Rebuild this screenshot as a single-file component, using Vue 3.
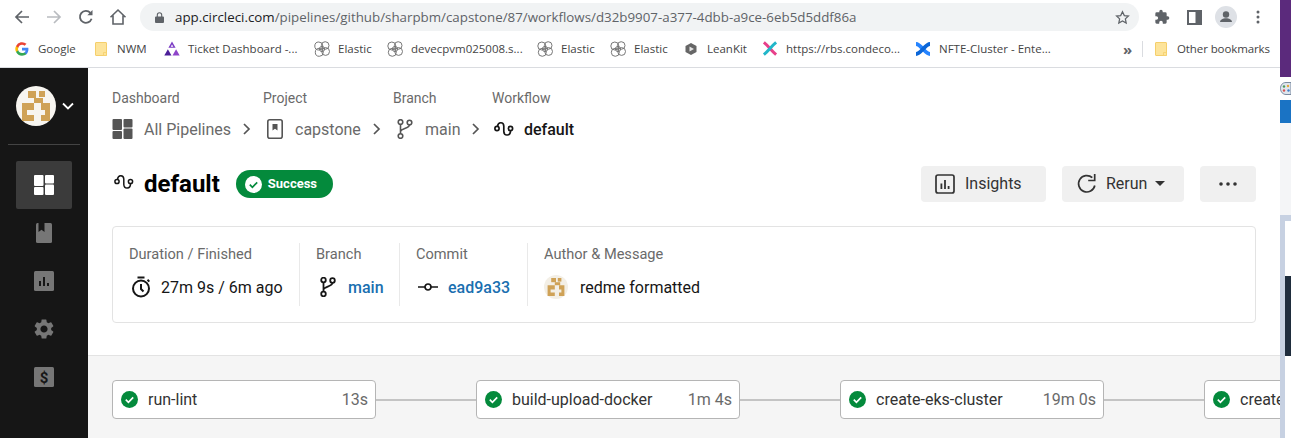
<template>
  <div class="screen">
    <div class="window">
      <div class="toolbar">
        <div class="tool">
          <svg width="16" height="16" viewBox="0 0 16 16" fill="none" stroke="#5f6368" stroke-width="1.7"><path d="M15 8H2M8 2 2 8l6 6" /></svg>
        </div>
        <div class="tool">
          <svg width="16" height="16" viewBox="0 0 16 16" fill="none" stroke="#b9bcc0" stroke-width="1.7"><path d="M1 8h13M8 2l6 6-6 6" /></svg>
        </div>
        <div class="tool">
          <svg width="16" height="16" viewBox="0 0 16 16" fill="none" stroke="#5f6368" stroke-width="1.8"><path d="M13.6 9.8A6 6 0 1 1 12.4 3.8" /><path d="M14.5 1v5.2H9.3z" fill="#5f6368" stroke="none" /></svg>
        </div>
        <div class="tool">
          <svg width="18" height="18" viewBox="0 0 18 18" fill="none" stroke="#5f6368" stroke-width="1.6"><path d="M1.5 9.3 9 2l7.5 7.3M4 7.5V16h10V7.5" /></svg>
        </div>
        <div class="urlbar">
          <svg class="lock" width="9" height="11" viewBox="0 0 9 11"><path d="M1 4.5h7a1 1 0 0 1 1 1V10a1 1 0 0 1-1 1H1a1 1 0 0 1-1-1V5.500a1 1 0 0 1 1-1z" fill="#5f6368" /><path d="M2.300 5V3a2.200 2.200 0 0 1 4.400 0v2" fill="none" stroke="#5f6368" stroke-width="1.100" /></svg>
          <span class="url"><span class="host">app.circleci.com</span>/pipelines/github/sharpbm/capstone/87/workflows/d32b9907-a377-4dbb-a9ce-6eb5d5ddf86a</span>
          <svg class="star" width="15" height="15" viewBox="0 0 24 24" fill="none" stroke="#5f6368" stroke-width="2"><path d="m12 2.800 2.900 6.100 6.600.8-4.900 4.500 1.300 6.600-5.900-3.300-5.900 3.300 1.300-6.600-4.900-4.500 6.600-.8z" /></svg>
        </div>
        <div class="actions">
          <div class="tool">
            <svg width="16" height="16" viewBox="0 0 24 24" fill="#5f6368"><path d="M20.500 11H19V7a2 2 0 0 0-2-2h-4V3.500a2.500 2.500 0 0 0-5 0V5H4a2 2 0 0 0-2 2v3.800h1.500a2.700 2.700 0 0 1 0 5.400H2V20a2 2 0 0 0 2 2h3.800v-1.500a2.700 2.700 0 0 1 5.400 0V22H17a2 2 0 0 0 2-2v-4h1.500a2.500 2.500 0 0 0 0-5z" /></svg>
          </div>
          <div class="tool">
            <svg width="15" height="15" viewBox="0 0 15 15"><path d="M0 0h15v15H0z" fill="#5f6368" /><path d="M2 2h6.500v11H2z" fill="#fff" /></svg>
          </div>
          <div class="tool">
            <svg width="22" height="22" viewBox="0 0 22 22"><circle cx="11" cy="11" r="11" fill="#dee1e6" /><circle cx="11" cy="8.500" r="3.200" fill="#5f6368" /><path d="M5 16c.3-2.700 3-3.800 6-3.800s5.700 1.100 6 3.800z" fill="#5f6368" /></svg>
          </div>
          <div class="tool">
            <svg width="4" height="14" viewBox="0 0 4 14" fill="#5f6368"><circle cx="2" cy="2" r="1.500" /><circle cx="2" cy="7" r="1.500" /><circle cx="2" cy="12" r="1.500" /></svg>
          </div>
        </div>
      </div>

      <div class="bookmarks">
        <div v-for="b in bookmarks" :key="b.left" class="bookmark" :style="{ width: b.width + 'px' }">
          <span class="favicon">
            <svg v-if="b.icon === 'google'" width="14" height="14" viewBox="0 0 24 24">
              <path d="M23 12.300c0-.8-.1-1.600-.2-2.300H12v4.400h6.200a5.300 5.300 0 0 1-2.300 3.500v2.900h3.700c2.200-2 3.400-5 3.400-8.500z" fill="#4285f4" />
              <path d="M12 23.500c3.100 0 5.700-1 7.600-2.800l-3.700-2.900c-1 .7-2.300 1.100-3.900 1.100-3 0-5.500-2-6.400-4.800H1.800v3A11.500 11.500 0 0 0 12 23.500z" fill="#34a853" />
              <path d="M5.600 14.100a6.900 6.900 0 0 1 0-4.400v-3H1.800a11.500 11.500 0 0 0 0 10.400z" fill="#fbbc05" />
              <path d="M12 4.800c1.700 0 3.200.6 4.400 1.700l3.300-3.300A11.500 11.500 0 0 0 1.800 6.700l3.800 3C6.500 6.800 9 4.800 12 4.800z" fill="#ea4335" />
            </svg>
            <svg v-else-if="b.icon === 'folder'" width="12" height="14" viewBox="0 0 12 14">
              <path d="M1 .5h10a.5.5 0 0 1 .5.500v12a.5.5 0 0 1-.5.500H1a.5.5 0 0 1-.5-.5V1A.5.5 0 0 1 1 .5z" fill="#fde49b" stroke="#f5cf6b" />
              <path d="M8.500 10.500h3v3h-3z" fill="#fde49b" stroke="#f5cf6b" stroke-width=".8" />
            </svg>
            <svg v-else-if="b.icon === 'ticket'" width="16" height="16" viewBox="0 0 16 16">
              <path d="m8 .5 3.600 6.200H4.400z" fill="#7b3cc4" />
              <path d="m.3 14.500 3.600-6.200 3.600 6.200z" fill="#4b1f99" />
              <path d="m8.500 14.500 3.600-6.200 3.600 6.200z" fill="#8e44c9" />
              <path d="M8 3.500 9.300 5.700H6.700z" fill="#fff" />
            </svg>
            <svg v-else-if="b.icon === 'elastic'" width="16" height="16" viewBox="0 0 16 16" fill="none" stroke="#777" stroke-width="1">
              <circle cx="4.800" cy="5" r="4" />
              <circle cx="11.200" cy="4.500" r="3.800" />
              <circle cx="11.600" cy="10.500" r="3.900" />
              <circle cx="5.300" cy="11.300" r="4" />
              <circle cx="8" cy="8" r="2.600" />
            </svg>
            <svg v-else-if="b.icon === 'leankit'" width="14" height="14" viewBox="0 0 14 14">
              <path d="m7 1 5.500 3v6L7 13l-5.500-3V4z" fill="#666" />
              <path d="M5.500 4.500 10 7l-4.500 2.500z" fill="#e4e4e4" />
            </svg>
            <svg v-else-if="b.icon === 'condeco'" width="17" height="17" viewBox="0 0 17 17" fill="none" stroke-width="3.200">
              <path d="M2 2c5 4 8 9 13 13" stroke="#e8408a" />
              <path d="M15 2C10 6 7 11 2 15" stroke="#22b6c9" />
            </svg>
            <svg v-else width="16" height="16" viewBox="0 0 16 16" fill="none" stroke="#2684ff" stroke-width="3.800">
              <path d="M1 3c5 0 9 10 14 10" />
              <path d="M15 3C10 3 6 13 1 13" stroke="#0b66d8" />
            </svg>
          </span>
          <span>{{ b.label }}</span>
        </div>
        <div class="more-marks">
          <span class="chev">»</span>
          <span class="divider"></span>
          <div class="bookmark">
            <span class="favicon">
              <svg width="12" height="14" viewBox="0 0 12 14">
                <path d="M1 .5h10a.5.5 0 0 1 .5.500v12a.5.5 0 0 1-.5.500H1a.5.5 0 0 1-.5-.5V1A.5.5 0 0 1 1 .5z" fill="#fde49b" stroke="#f5cf6b" />
                <path d="M8.500 10.500h3v3h-3z" fill="#fde49b" stroke="#f5cf6b" stroke-width=".8" />
              </svg>
            </span>
            <span class="other">Other bookmarks</span>
          </div>
        </div>
      </div>

      <div class="app">
        <aside class="sidebar">
          <div class="org">
            <svg width="40" height="40" viewBox="0 0 40 40">
              <circle cx="20" cy="20" r="20" fill="#f7f5f0" />
              <path v-for="p in avatarCells" :key="p" :d="p" fill="#cfa257" />
            </svg>
            <svg width="12" height="8" viewBox="0 0 12 8" fill="none" stroke="#fff" stroke-width="1.800"><path d="m1 1.500 5 5 5-5" /></svg>
          </div>
          <div class="side-line"></div>
          <div class="side-item active">
            <svg width="20" height="20" viewBox="0 0 20 20" fill="#fff">
              <rect width="9.500" height="11" rx="1" />
              <rect y="12" width="9.500" height="8" rx="1" />
              <rect x="11" width="9" height="8.500" rx="1" />
              <rect x="11" y="9.500" width="9" height="10.500" rx="1" />
            </svg>
          </div>
          <div class="side-item">
            <svg width="16" height="20" viewBox="0 0 16 20">
              <rect width="16" height="20" rx="1.500" fill="#767676" />
              <path d="M2.500 0h6v9L5.500 6.800 2.500 9z" fill="#161616" />
            </svg>
          </div>
          <div class="side-item">
            <svg width="20" height="20" viewBox="0 0 20 20">
              <rect width="20" height="20" rx="1.500" fill="#767676" />
              <path d="M5 10h2v5H5zM9 6h2v9H9zM13 12h2v3h-2z" fill="#161616" />
            </svg>
          </div>
          <div class="side-item">
            <svg width="24" height="24" viewBox="0 0 24 24" fill="#767676"><path d="M19.140 12.940c.04-.3.06-.61.06-.94 0-.32-.02-.64-.07-.94l2.030-1.580a.49.49 0 0 0 .12-.61l-1.920-3.320a.488.488 0 0 0-.59-.22l-2.390.96c-.5-.38-1.030-.7-1.620-.94l-.36-2.540a.484.484 0 0 0-.48-.41h-3.840c-.24 0-.43.17-.47.41l-.36 2.540c-.59.24-1.130.57-1.620.94l-2.390-.96c-.22-.08-.47 0-.59.22L2.740 8.870c-.12.21-.08.47.12.61l2.030 1.580c-.05.3-.09.63-.09.94s.02.64.07.94l-2.030 1.580a.49.49 0 0 0-.12.61l1.920 3.320c.12.22.37.29.59.22l2.390-.96c.5.38 1.030.7 1.620.94l.36 2.540c.05.24.24.41.48.41h3.840c.24 0 .44-.17.47-.41l.36-2.540c.59-.24 1.130-.56 1.620-.94l2.390.96c.22.08.47 0 .59-.22l1.920-3.320c.12-.22.07-.47-.12-.61l-2.010-1.580zM12 15.600c-1.980 0-3.600-1.620-3.600-3.600s1.620-3.600 3.600-3.600 3.600 1.620 3.600 3.600-1.620 3.600-3.600 3.600z" /></svg>
          </div>
          <div class="side-item">
            <svg width="20" height="20" viewBox="0 0 20 20">
              <rect width="20" height="20" rx="1.500" fill="#767676" />
              <text x="10" y="15.500" text-anchor="middle" class="dollar">$</text>
            </svg>
          </div>
        </aside>

        <main class="content">
          <div class="head">
            <nav class="crumbs">
              <div class="crumb crumb-dash">
                <div class="crumb-label">Dashboard</div>
                <div class="crumb-row">
                  <svg width="21" height="20" viewBox="0 0 20 20" fill="#555">
                    <rect width="9.500" height="11" rx="1" />
                    <rect y="12" width="9.500" height="8" rx="1" />
                    <rect x="11" width="9" height="8.500" rx="1" />
                    <rect x="11" y="9.500" width="9" height="10.500" rx="1" />
                  </svg>
                  <span>All Pipelines</span>
                  <svg class="gt" width="8" height="12" viewBox="0 0 8 12" fill="none" stroke="#555" stroke-width="1.700"><path d="m1 1 5 5-5 5" /></svg>
                </div>
              </div>
              <div class="crumb crumb-proj">
                <div class="crumb-label">Project</div>
                <div class="crumb-row">
                  <svg width="16" height="20" viewBox="0 0 16 20" fill="none">
                    <rect x=".8" y=".8" width="14.400" height="18.400" rx="2" stroke="#555" stroke-width="1.600" />
                    <path d="M5.500 5h5v6.500L8 9.700l-2.500 1.800z" fill="#555" />
                  </svg>
                  <span>capstone</span>
                  <svg class="gt" width="8" height="12" viewBox="0 0 8 12" fill="none" stroke="#555" stroke-width="1.700"><path d="m1 1 5 5-5 5" /></svg>
                </div>
              </div>
              <div class="crumb crumb-branch">
                <div class="crumb-label">Branch</div>
                <div class="crumb-row">
                  <svg width="16" height="20" viewBox="0 0 16 20" fill="none" stroke="#555" stroke-width="1.600">
                    <circle cx="3.500" cy="3" r="2.300" />
                    <circle cx="3.500" cy="17" r="2.300" />
                    <circle cx="12.500" cy="3.500" r="2.300" />
                    <path d="M3.500 5.300v9.400M12.500 5.800c0 4-9 3.500-9 7" />
                  </svg>
                  <span>main</span>
                  <svg class="gt" width="8" height="12" viewBox="0 0 8 12" fill="none" stroke="#555" stroke-width="1.700"><path d="m1 1 5 5-5 5" /></svg>
                </div>
              </div>
              <div class="crumb">
                <div class="crumb-label">Workflow</div>
                <div class="crumb-row current">
                  <svg class="wf" width="20" height="18" viewBox="0 0 20 16" fill="none" stroke="#161616" stroke-width="1.700">
                    <circle cx="3" cy="7.500" r="2.100" />
                    <circle cx="16.500" cy="7.500" r="2.100" />
                    <path d="M3.500 5.300C4 .8 9.500.5 9.800 5v5.500c.3 4.800 6.700 4.800 6.700-.800" />
                  </svg>
                  <span>default</span>
                </div>
              </div>
            </nav>

            <div class="title-row">
              <svg class="title-icon" width="20" height="18" viewBox="0 0 20 16" fill="none" stroke="#161616" stroke-width="1.500">
                <circle cx="3" cy="7.500" r="2.100" />
                <circle cx="16.500" cy="7.500" r="2.100" />
                <path d="M3.500 5.300C4 .8 9.500.5 9.800 5v5.500c.3 4.800 6.700 4.800 6.700-.800" />
              </svg>
              <h1>default</h1>
              <div class="badge">
                <svg width="17" height="17" viewBox="0 0 17 17">
                  <circle cx="8.500" cy="8.500" r="8.500" fill="#fff" />
                  <path d="m4.800 8.700 2.600 2.600 4.800-5" fill="none" stroke="#048a3c" stroke-width="1.700" />
                </svg>
                <span>Success</span>
              </div>
              <div class="buttons">
                <button class="btn btn-insights">
                  <svg width="20" height="20" viewBox="0 0 20 20" fill="none">
                    <rect x="1" y="1" width="18" height="18" rx="2" stroke="#333" stroke-width="1.700" />
                    <path d="M5.500 9.500h1.800V15H5.500zM9.100 6h1.800v9H9.100zM12.700 12h1.800v3h-1.800z" fill="#333" />
                  </svg>
                  Insights
                </button>
                <button class="btn btn-rerun">
                  <svg width="22" height="22" viewBox="0 0 22 22" fill="none">
                    <path d="M18.800 12.500A8.200 8.200 0 1 1 16.300 4.700" stroke="#333" stroke-width="1.700" />
                    <path d="M18.700 1v6.500h-6.500" stroke="#333" stroke-width="1.700" />
                  </svg>
                  Rerun
                  <svg width="10" height="5" viewBox="0 0 10 5"><path d="M0 0h10L5 5z" fill="#333" /></svg>
                </button>
                <button class="btn btn-more">
                  <svg width="18" height="4" viewBox="0 0 18 4" fill="#333"><circle cx="2" cy="2" r="1.800" /><circle cx="9" cy="2" r="1.800" /><circle cx="16" cy="2" r="1.800" /></svg>
                </button>
              </div>
            </div>

            <section class="card">
              <div class="cell cell-duration">
                <div class="cell-label">Duration / Finished</div>
                <div class="cell-value">
                  <svg width="20" height="22" viewBox="0 0 20 22" fill="none" stroke="#161616" stroke-width="2">
                    <circle cx="10" cy="12.500" r="8" />
                    <path d="M6.500 1.500h7M10 8v5l2.500 2.500" />
                    <path d="m16.500 3.800 1.800 1.800" />
                  </svg>
                  <span>27m 9s / 6m ago</span>
                </div>
              </div>
              <div class="cell cell-branch">
                <div class="cell-label">Branch</div>
                <div class="cell-value">
                  <svg width="16" height="20" viewBox="0 0 16 20" fill="none" stroke="#161616" stroke-width="1.800">
                    <circle cx="3.500" cy="3" r="2.300" />
                    <circle cx="3.500" cy="17" r="2.300" />
                    <circle cx="12.500" cy="3.500" r="2.300" />
                    <path d="M3.500 5.300v9.400M12.500 5.800c0 4-9 3.500-9 7" />
                  </svg>
                  <a class="link">main</a>
                </div>
              </div>
              <div class="cell cell-commit">
                <div class="cell-label">Commit</div>
                <div class="cell-value">
                  <svg width="20" height="8" viewBox="0 0 20 8" fill="none" stroke="#161616" stroke-width="1.700">
                    <circle cx="10" cy="4" r="3" />
                    <path d="M0 4h7M13 4h7" />
                  </svg>
                  <a class="link">ead9a33</a>
                </div>
              </div>
              <div class="cell cell-author">
                <div class="cell-label">Author &amp; Message</div>
                <div class="cell-value">
                  <svg width="24" height="24" viewBox="0 0 40 40">
                    <circle cx="20" cy="20" r="20" fill="#f3efe6" />
                    <path v-for="p in avatarCells" :key="p" :d="p" fill="#cfa257" />
                  </svg>
                  <span>redme formatted</span>
                </div>
              </div>
            </section>
          </div>

          <section class="pipeline">
            <template v-for="(job, i) in jobs" :key="job.name">
              <div class="job">
                <svg width="17" height="17" viewBox="0 0 17 17">
                  <circle cx="8.500" cy="8.500" r="8.500" fill="#048a3c" />
                  <path d="m4.800 8.700 2.600 2.600 4.800-5" fill="none" stroke="#fff" stroke-width="1.700" />
                </svg>
                <span class="job-name">{{ job.name }}</span>
                <span class="job-time">{{ job.time }}</span>
              </div>
              <div v-if="i < jobs.length - 1" class="link-line"></div>
            </template>
          </section>
        </main>
      </div>
    </div>

    <div class="strip">
      <div class="strip-purple"></div>
      <div class="strip-icon">
        <svg width="11" height="13" viewBox="0 0 11 13">
          <path d="M6 .5C2.500.5.500 3 .5 6.500S3 12.500 6 12.500h5V.5z" fill="#dfe6ee" stroke="#7a8ba0" />
          <circle cx="4" cy="4.500" r="1.200" fill="#4c9a5b" />
          <circle cx="8" cy="4" r="1.200" fill="#e2a53a" />
          <circle cx="4" cy="8.500" r="1.200" fill="#d9534f" />
          <circle cx="8.500" cy="8.500" r="1.200" fill="#3f7fca" />
        </svg>
      </div>
      <div class="strip-blue"></div>
      <div class="strip-light"></div>
      <div class="strip-panel">
        <div class="strip-white"></div>
        <div class="strip-dark"></div>
        <div class="strip-rest"></div>
      </div>
    </div>
  </div>
</template>

<script setup>
const bookmarks = [
  { label: 'Google', icon: 'google', width: 79 },
  { label: 'NWM', icon: 'folder', width: 71 },
  { label: 'Ticket Dashboard -...', icon: 'ticket', width: 150 },
  { label: 'Elastic', icon: 'elastic', width: 73 },
  { label: 'devecpvm025008.s...', icon: 'elastic', width: 150 },
  { label: 'Elastic', icon: 'elastic', width: 73 },
  { label: 'Elastic', icon: 'elastic', width: 73 },
  { label: 'LeanKit', icon: 'leankit', width: 79 },
  { label: 'https://rbs.condeco...', icon: 'condeco', width: 153 },
  { label: 'NFTE-Cluster - Ente...', icon: 'confluence', width: 200 },
]

const avatarCells = [
  'M12 5h8v7h-8z',
  'M23 5h6v6h-6z',
  'M18 12h9v5h-9z',
  'M6 17h12v7h-7v5h7v6H6z',
  'M25 17h9v18h-9v-6h4v-5h-4z',
]

const jobs = [
  { name: 'run-lint', time: '13s' },
  { name: 'build-upload-docker', time: '1m 4s' },
  { name: 'create-eks-cluster', time: '19m 0s' },
  { name: 'create-eks-nodes', time: '3m 2s' },
]
</script>

<style>
html,
body {
  margin: 0;
  background: #fff;
}
</style>

<style scoped>
.screen {
  display: flex;
  width: 1291px;
  height: 438px;
  overflow: hidden;
  font-family: Roboto, "Liberation Sans", sans-serif;
  color: #161616;
}

.window {
  width: 1280px;
  display: flex;
  flex-direction: column;
  overflow: hidden;
}

.toolbar {
  height: 34px;
  display: flex;
  align-items: center;
  padding-left: 6px;
  box-sizing: border-box;
}

.tool {
  width: 32px;
  height: 32px;
  display: flex;
  align-items: center;
  justify-content: center;
}

.urlbar {
  width: 999px;
  height: 28px;
  margin-left: 6px;
  display: flex;
  align-items: center;
  background: #f1f3f4;
  border-radius: 14px;
  padding: 0 9px 0 15px;
  box-sizing: border-box;
}

.url {
  margin-left: 11px;
  font: 13.33px "Open Sans", sans-serif;
  color: #5f6368;
  white-space: nowrap;
}

.host {
  color: #202124;
}

.star {
  margin-left: auto;
}

.actions {
  display: flex;
  margin-left: 7px;
}

.bookmarks {
  height: 29px;
  padding: 0 0 4px 14px;
  display: flex;
  align-items: center;
  border-bottom: 1px solid #dadce0;
  font: 11.5px "Open Sans", sans-serif;
  color: #444;
}

.bookmark {
  display: flex;
  align-items: center;
  gap: 8px;
  white-space: nowrap;
  flex: none;
}

.favicon {
  width: 16px;
  height: 16px;
  display: flex;
  align-items: center;
  justify-content: center;
}

.more-marks {
  display: flex;
  align-items: center;
  margin-left: auto;
  padding-right: 11px;
}

.chev {
  width: 9px;
  font-size: 15px;
  line-height: 16px;
  font-weight: 700;
  color: #5f6368;
  margin-right: 10px;
}

.divider {
  width: 1px;
  height: 16px;
  background: #dadce0;
  margin-right: 10px;
}

.other {
  width: 92px;
  letter-spacing: -0.1px;
}

.app {
  flex: 1;
  display: flex;
  min-height: 0;
}

.sidebar {
  width: 88px;
  flex: none;
  background: #161616;
  box-sizing: border-box;
  padding-top: 18px;
  display: flex;
  flex-direction: column;
  align-items: center;
}

.org {
  width: 72px;
  padding-left: 8px;
  box-sizing: border-box;
  display: flex;
  align-items: center;
  gap: 6px;
}

.side-line {
  width: 72px;
  height: 1px;
  background: #444;
  margin: 18px 0 16px;
}

.side-item {
  width: 56px;
  height: 48px;
  flex: none;
  display: flex;
  align-items: center;
  justify-content: center;
  border-radius: 2px;
}

.side-item.active {
  background: #3b3b3b;
}

.dollar {
  font: 700 15px Roboto, sans-serif;
  fill: #161616;
}

.content {
  flex: 1;
  min-width: 0;
  display: flex;
  flex-direction: column;
}

.head {
  height: 288px;
  padding: 21px 24px 0;
  box-sizing: border-box;
  border-bottom: 1px solid #e3e3e3;
}

.crumbs {
  display: flex;
}

.crumb-label {
  font-size: 14px;
  line-height: 18px;
  color: #6a6a6a;
}

.crumb-row {
  display: flex;
  align-items: center;
  height: 24px;
  margin-top: 10px;
  font-size: 16px;
  color: #6a6a6a;
  white-space: nowrap;
}

.crumb-row span {
  margin-left: 11px;
}

.crumb-row .gt {
  margin-left: 12px;
}

.crumb-row.current {
  color: #161616;
  font-weight: 500;
}

.crumb-dash {
  width: 151px;
}

.crumb-proj {
  width: 130px;
}

.crumb-proj .crumb-row > svg:first-child {
  margin-left: 4px;
}

.crumb-proj .crumb-row span {
  margin-left: 12px;
}

.crumb-branch {
  width: 99px;
}

.crumb-branch .crumb-row > svg:first-child {
  margin-left: 4px;
}

.crumb-branch .crumb-row span {
  margin-left: 12px;
}

.crumb-row .wf {
  margin-left: 2px;
}

.crumb-row.current span {
  margin-left: 10px;
}

.title-row {
  display: flex;
  align-items: center;
  height: 36px;
  margin-top: 25px;
}

.title-icon {
  margin-left: 2px;
  margin-bottom: 4px;
}

h1 {
  margin: 0 0 0 10px;
  font-size: 24px;
  font-weight: 700;
  line-height: 36px;
  color: #000;
}

.badge {
  margin-left: 16px;
  height: 28px;
  width: 97px;
  box-sizing: border-box;
  padding-left: 9px;
  display: flex;
  align-items: center;
  gap: 6px;
  border-radius: 14px;
  background: #048a3c;
  color: #fff;
  font-size: 13px;
  font-weight: 700;
}

.badge span {
  margin-top: -2px;
}

.buttons {
  margin-left: auto;
  display: flex;
  gap: 16px;
}

.btn {
  height: 36px;
  border: 0;
  border-radius: 4px;
  background: #f0f0f0;
  color: #333;
  font: 16px Roboto, sans-serif;
  display: flex;
  align-items: center;
  padding: 0 0 1px 14px;
  box-sizing: border-box;
}

.btn-insights {
  width: 125px;
  gap: 10px;
}

.btn-rerun {
  width: 122px;
  gap: 8px;
}

.btn-more {
  width: 56px;
  justify-content: center;
  padding: 0;
}

.card {
  margin-top: 24px;
  height: 97px;
  box-sizing: border-box;
  border: 1px solid #e3e3e3;
  border-radius: 4px;
  display: flex;
  padding: 16px 0;
}

.cell {
  box-sizing: border-box;
  padding-left: 16px;
  border-right: 1px solid #e9e9e9;
}

.cell-duration {
  width: 187px;
}

.cell-branch {
  width: 100px;
}

.cell-commit {
  width: 128px;
}

.cell-author {
  border-right: 0;
}

.cell-label {
  font-size: 14.6px;
  line-height: 22px;
  color: #6a6a6a;
}

.cell-value {
  display: flex;
  align-items: center;
  gap: 12px;
  height: 24px;
  margin-top: 10px;
  font-size: 16px;
  color: #161616;
  white-space: nowrap;
}

.cell-duration .cell-value {
  padding-left: 2px;
  gap: 10px;
}

.cell-branch .cell-value {
  padding-left: 4px;
}

.cell-commit .cell-value {
  padding-left: 2px;
  gap: 10px;
}

.link {
  color: #1a6fb0;
  font-weight: 500;
}

.pipeline {
  flex: 1;
  background: #f5f5f5;
  display: flex;
  align-items: flex-start;
  padding: 24px 0 0 24px;
  min-width: 0;
  overflow: hidden;
}

.job {
  width: 264px;
  height: 39px;
  flex: none;
  box-sizing: border-box;
  background: #fff;
  border: 1px solid #b5b5b5;
  border-radius: 4px;
  display: flex;
  align-items: center;
  padding: 0 7px 0 8px;
  font-size: 16px;
  color: #333;
  white-space: nowrap;
}

.job-name {
  margin-left: 10px;
}

.job-time {
  margin-left: auto;
  color: #6a6a6a;
}

.link-line {
  width: 100px;
  height: 2px;
  flex: none;
  margin-top: 19px;
  background: #c4c4c4;
}

.strip {
  width: 11px;
  flex: none;
  display: flex;
  flex-direction: column;
}

.strip-purple {
  height: 77px;
  background: #5b2a7c;
}

.strip-icon {
  height: 23px;
  display: flex;
  align-items: center;
}

.strip-blue {
  height: 23px;
  background: #1a73c4;
}

.strip-light {
  height: 92px;
  background: #f4f5f7;
}

.strip-panel {
  flex: 1;
  background: #c7d1e2;
  padding: 6px 0 0 5px;
  display: flex;
  flex-direction: column;
}

.strip-white {
  height: 55px;
  background: #fff;
}

.strip-dark {
  height: 80px;
  background: #1f2d3d;
}

.strip-rest {
  flex: 1;
  background: #fff;
}
</style>
